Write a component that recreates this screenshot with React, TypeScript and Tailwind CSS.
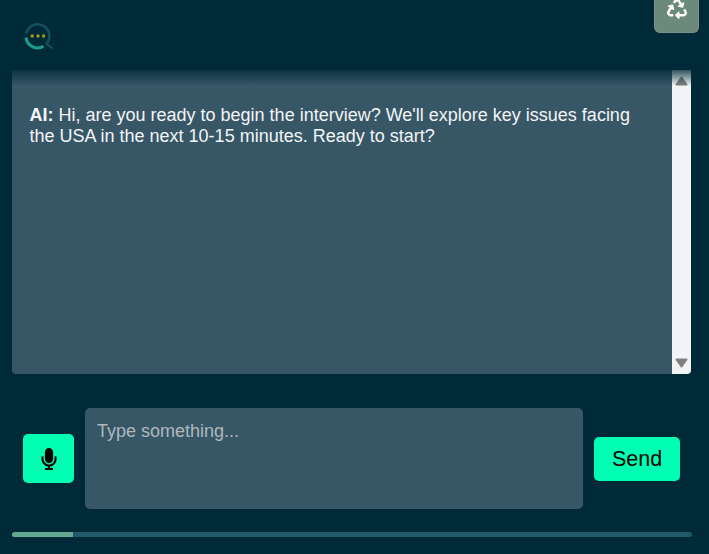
import { FaMicrophone, FaRecycle } from "react-icons/fa";

function Logo() {
  return (
    <svg width="32" height="30" viewBox="0 0 32 30" fill="none">
      <path d="M3.2 11.5 A11.7 11.7 0 1 1 22.7 22.5" stroke="#14505f" strokeWidth="2.6" />
      <path d="M23 21.5 L29.5 26.5" stroke="#14505f" strokeWidth="2" />
      <path d="M3 15.5 A11.7 11.7 0 0 0 20.5 24.3" stroke="#1d9c8c" strokeWidth="3" />
      <circle cx="9.2" cy="14" r="1.7" fill="#a6971f" />
      <circle cx="15" cy="14" r="1.7" fill="#a6971f" />
      <circle cx="20.6" cy="14" r="1.7" fill="#a6971f" />
    </svg>
  );
}

function ScrollArrow({ down }: { down?: boolean }) {
  return (
    <svg width="13" height="10" viewBox="0 0 13 10">
      <path
        d={down ? "M1.5 1.5 H11.5 L6.5 8.5 Z" : "M1.5 8.5 H11.5 L6.5 1.5 Z"}
        fill="#808080"
        stroke="#808080"
        strokeWidth="2"
        strokeLinejoin="round"
      />
    </svg>
  );
}

export default function App() {
  return (
    <div className="h-[554px] w-[709px] overflow-hidden bg-[#012a38] font-['Liberation_Sans',Arial,sans-serif]">
      <div className="flex h-[70px] items-start justify-between">
        <div className="ml-[23px] mt-[22px]">
          <Logo />
        </div>
        <button className="mr-[10px] flex h-[33px] w-[45px] items-start justify-center rounded-b-md border-x border-b border-[#7e9088] bg-[#6c8a7c] text-white">
          <FaRecycle size={20} className="-mt-[1px]" />
        </button>
      </div>

      <div className="relative mx-[12px] flex h-[304px] w-[679px] overflow-hidden rounded-b-[4px] bg-[#375767]">
        <div className="flex-1 pl-[17.5px] pr-[30px] pt-[35px] text-[18px] leading-[21px] text-[#f3f4f6]">
          <b>AI:</b> Hi, are you ready to begin the interview? We'll explore key issues facing the USA in the next 10-15 minutes. Ready to start?
        </div>
        <div className="flex w-[19px] flex-col items-center justify-between bg-[#f1f3f5] pb-[6px] pt-[6px]">
          <ScrollArrow />
          <ScrollArrow down />
        </div>
        <div className="absolute inset-x-0 top-0 h-[16px] bg-gradient-to-b from-[#012a38] to-transparent opacity-80" />
      </div>

      <div className="ml-[23px] mt-[34px] flex h-[101px] items-center">
        <button className="flex h-[49px] w-[51px] items-center justify-center rounded-[5px] bg-[#00ffb3] text-black">
          <FaMicrophone size={22} />
        </button>
        <div className="ml-[11px] h-[101px] w-[498px] rounded-[5px] bg-[#375767] px-[12px] py-[12px] text-[18px] leading-[23px] text-[#aeb8bd]">
          Type something...
        </div>
        <button className="ml-[11px] h-[44px] w-[86px] rounded-[5px] bg-[#00ffb3] pt-[1px] text-[21.5px] text-black">
          Send
        </button>
      </div>

      <div className="mx-[12px] mt-[23px] h-[5px] w-[680px] overflow-hidden rounded-full bg-[#1f5a6b]">
        <div className="h-full w-[61px] bg-[#63a892]" />
      </div>
    </div>
  );
}
